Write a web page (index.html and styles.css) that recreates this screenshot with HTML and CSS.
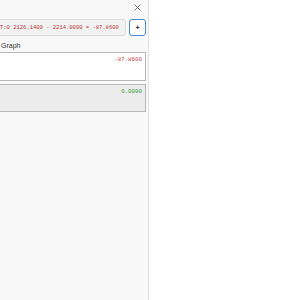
FILE: index.html
```html
<!DOCTYPE html>
<html lang="en">
<head>
    <meta charset="UTF-8">
    <title>Calc Panel</title>
    <link rel="stylesheet" href="styles.css">
</head>
<body>
    <div class="panel">
        <div class="panel-head">
            <span class="close-btn">
                <svg width="7" height="7" viewBox="0 0 7 7"><path d="M0.5 0.5L6.5 6.5M6.5 0.5L0.5 6.5" stroke="#666" stroke-width="0.9"/></svg>
            </span>
        </div>
        <div class="formula-row">
            <div class="formula">T:0 2126.1400 - 2214.0000 = -87.8600</div>
            <button class="add-btn">+</button>
        </div>
        <div class="label">Graph</div>
        <div class="result-box">
            <span class="value neg">-87.8600</span>
        </div>
        <div class="result-box muted">
            <span class="value pos">0.0000</span>
        </div>
    </div>
</body>
</html>
```
FILE: styles.css
```css
body {
    margin: 0;
    background: #fff;
    font-family: 'Liberation Sans', Arial, sans-serif;
}
.panel {
    width: 148px;
    height: 300px;
    background: #f8f8f8;
    border-right: 1px solid #e2e2e2;
    overflow: hidden;
}
.panel-head {
    height: 19px;
    display: flex;
    justify-content: flex-end;
    align-items: flex-start;
}
.close-btn {
    display: flex;
    margin: 4px 7px 0 0;
}
.formula-row {
    display: flex;
    gap: 3px;
    height: 17px;
    margin: 0 2px 0 -6px;
}
.formula {
    flex: 1;
    min-width: 0;
    box-sizing: border-box;
    border: 1px solid #dcdcdc;
    border-radius: 3px;
    background: #f2f2f2;
    padding-left: 5px;
    font-family: 'Liberation Mono', 'DejaVu Sans Mono', monospace;
    font-size: 5.5px;
    line-height: 15px;
    color: #b83232;
    white-space: nowrap;
    overflow: hidden;
}
.add-btn {
    width: 17px;
    height: 17px;
    padding: 0;
    box-sizing: border-box;
    border: 1px solid #4a86d6;
    border-radius: 3px;
    background: #fff;
    color: #333;
    font-family: 'Liberation Sans', Arial, sans-serif;
    font-size: 7px;
    font-weight: bold;
    line-height: 15px;
}
.label {
    margin: 5px 0 0 1px;
    height: 11px;
    font-size: 7px;
    line-height: 9px;
    color: #333;
}
.result-box {
    height: 29px;
    box-sizing: border-box;
    margin: 0 2px 3px -6px;
    border: 1px solid #b8b8b8;
    background: #fff;
    display: flex;
    justify-content: flex-end;
    align-items: flex-start;
    padding: 3px 3px 0 0;
}
.result-box.muted {
    height: 28px;
    background: #ececec;
}
.value {
    font-family: 'Liberation Mono', 'DejaVu Sans Mono', monospace;
    font-size: 5.8px;
    line-height: 8px;
}
.neg {
    color: #c04545;
}
.pos {
    color: #369936;
}
```
